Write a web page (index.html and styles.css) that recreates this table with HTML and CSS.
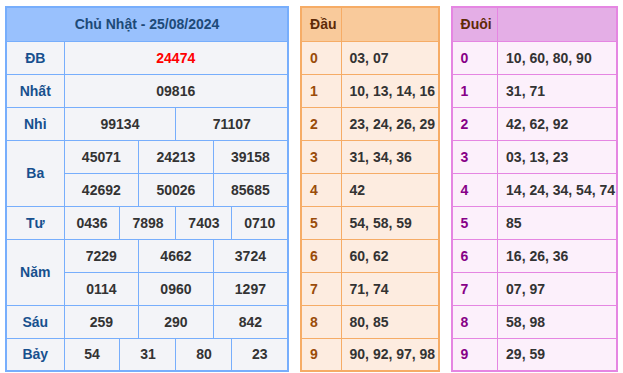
FILE: index.html
```html
<!DOCTYPE html>
<html lang="vi">
<head>
    <meta charset="UTF-8">
    <meta name="viewport" content="width=device-width, initial-scale=1.0">
    <title>Kết quả xổ số</title>
    <link rel="stylesheet" href="styles.css">
</head>
<body>
    <div class="wrap">
        <table class="kq">
            <colgroup>
                <col class="col-label">
                <col span="12">
            </colgroup>
            <thead>
                <tr><th colspan="13">Chủ Nhật - 25/08/2024</th></tr>
            </thead>
            <tbody>
                <tr><td class="lbl">ĐB</td><td colspan="12" class="db">24474</td></tr>
                <tr><td class="lbl">Nhất</td><td colspan="12">09816</td></tr>
                <tr><td class="lbl">Nhì</td><td colspan="6">99134</td><td colspan="6">71107</td></tr>
                <tr><td class="lbl" rowspan="2">Ba</td><td colspan="4">45071</td><td colspan="4">24213</td><td colspan="4">39158</td></tr>
                <tr><td colspan="4">42692</td><td colspan="4">50026</td><td colspan="4">85685</td></tr>
                <tr><td class="lbl">Tư</td><td colspan="3">0436</td><td colspan="3">7898</td><td colspan="3">7403</td><td colspan="3">0710</td></tr>
                <tr><td class="lbl" rowspan="2">Năm</td><td colspan="4">7229</td><td colspan="4">4662</td><td colspan="4">3724</td></tr>
                <tr><td colspan="4">0114</td><td colspan="4">0960</td><td colspan="4">1297</td></tr>
                <tr><td class="lbl">Sáu</td><td colspan="4">259</td><td colspan="4">290</td><td colspan="4">842</td></tr>
                <tr><td class="lbl">Bảy</td><td colspan="3">54</td><td colspan="3">31</td><td colspan="3">80</td><td colspan="3">23</td></tr>
            </tbody>
        </table>

        <table class="lt dau">
            <thead><tr><th class="lbl">Đầu</th><th></th></tr></thead>
            <tbody>
                <tr><td class="lbl">0</td><td>03, 07</td></tr>
                <tr><td class="lbl">1</td><td>10, 13, 14, 16</td></tr>
                <tr><td class="lbl">2</td><td>23, 24, 26, 29</td></tr>
                <tr><td class="lbl">3</td><td>31, 34, 36</td></tr>
                <tr><td class="lbl">4</td><td>42</td></tr>
                <tr><td class="lbl">5</td><td>54, 58, 59</td></tr>
                <tr><td class="lbl">6</td><td>60, 62</td></tr>
                <tr><td class="lbl">7</td><td>71, 74</td></tr>
                <tr><td class="lbl">8</td><td>80, 85</td></tr>
                <tr><td class="lbl">9</td><td>90, 92, 97, 98</td></tr>
            </tbody>
        </table>

        <table class="lt duoi">
            <thead><tr><th class="lbl">Đuôi</th><th></th></tr></thead>
            <tbody>
                <tr><td class="lbl">0</td><td>10, 60, 80, 90</td></tr>
                <tr><td class="lbl">1</td><td>31, 71</td></tr>
                <tr><td class="lbl">2</td><td>42, 62, 92</td></tr>
                <tr><td class="lbl">3</td><td>03, 13, 23</td></tr>
                <tr><td class="lbl">4</td><td>14, 24, 34, 54, 74</td></tr>
                <tr><td class="lbl">5</td><td>85</td></tr>
                <tr><td class="lbl">6</td><td>16, 26, 36</td></tr>
                <tr><td class="lbl">7</td><td>07, 97</td></tr>
                <tr><td class="lbl">8</td><td>58, 98</td></tr>
                <tr><td class="lbl">9</td><td>29, 59</td></tr>
            </tbody>
        </table>
    </div>
</body>
</html>
```

FILE: styles.css
```css
* {
    box-sizing: border-box;
    margin: 0;
    padding: 0;
}

body {
    font-family: "Liberation Sans", Arial, sans-serif;
    font-size: 14px;
    font-weight: bold;
    color: #333;
    background: #fff;
}

.wrap {
    display: flex;
    align-items: flex-start;
    gap: 11px;
    padding: 6px 5px;
}

table {
    border-collapse: collapse;
    table-layout: fixed;
}

th,
td {
    height: 33px;
    padding: 0;
    line-height: 16px;
}

/* main result table */
.kq {
    width: 285px;
    border: 2px solid #77aefc;
    background: #f3f4f8;
}

.kq .col-label {
    width: 58px;
}

.kq th {
    height: 34px;
    background: #99c1fd;
    color: #1d4a78;
    text-align: center;
    border: 1px solid #77aefc;
}

.kq td {
    border: 1px solid #77aefc;
    text-align: center;
}

.kq .lbl {
    color: #17508e;
}

.kq .db {
    color: #f00;
}

/* loto tables */
.lt td,
.lt th {
    text-align: left;
    padding-left: 8px;
}

.lt th {
    height: 34px;
    color: #5e2a08;
}

.dau {
    width: 140px;
    border: 2px solid #f6ac66;
    background: #fdece0;
}

.dau th {
    background: #f9ca9b;
}

.dau td,
.dau th {
    border: 1px solid #f6ac66;
}

.dau .lbl {
    width: 40px;
}

.dau td.lbl {
    color: #9a4c0a;
}

.duoi {
    width: 168px;
    border: 2px solid #e586e2;
    background: #fcf0fb;
}

.duoi th {
    background: #e4aee6;
}

.duoi td,
.duoi th {
    border: 1px solid #e586e2;
}

.duoi .lbl {
    width: 46px;
}

.duoi td.lbl {
    color: #870087;
}
```
